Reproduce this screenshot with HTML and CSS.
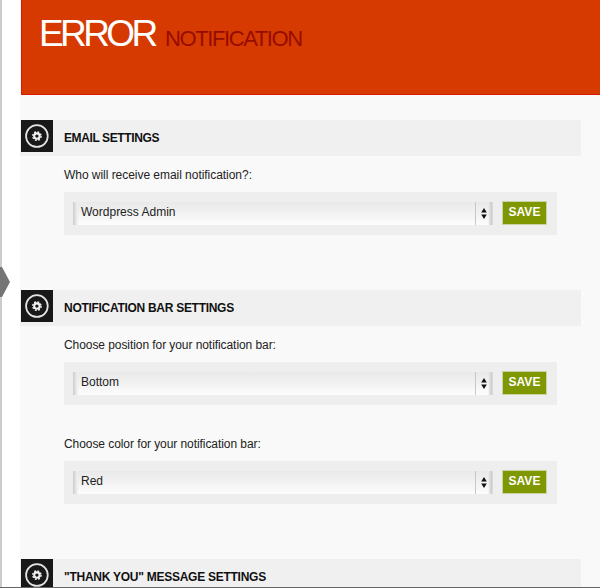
FILE: index.html
```html
<!DOCTYPE html>
<html lang="en">
<head>
<meta charset="utf-8">
<title>Error Notification</title>
<link rel="stylesheet" href="styles.css">
</head>
<body>
<svg class="defs" width="0" height="0" aria-hidden="true">
  <symbol id="gear" viewBox="0 0 33 33">
    <circle cx="16.4" cy="16.6" r="11.2" fill="none" stroke="#e4e4e4" stroke-width="1.8"/>
    <circle cx="16.4" cy="16.6" r="2.8" fill="none" stroke="#f2f2f2" stroke-width="2.1"/>
    <circle cx="16.4" cy="16.6" r="4.3" fill="none" stroke="#f2f2f2" stroke-width="1.5" stroke-dasharray="1.9 1.477"/>
  </symbol>
  <symbol id="arrows" viewBox="0 0 6 11">
    <path d="M3 0L5.8 4.4H.2zM3 11L.2 6.6h5.6z" fill="#111"/>
  </symbol>
</svg>
<div class="page">
  <div class="edge"></div>
  <svg class="marker" width="10" height="30" viewBox="0 0 10 30" aria-hidden="true"><path d="M0 0H2L10 15L2 30H0z" fill="#757575"/></svg>
  <main class="content">
    <header class="banner">
      <h1><span class="error">ERROR</span><span class="sub">NOTIFICATION</span></h1>
    </header>
    <section class="section first">
      <div class="head"><svg class="icon"><use href="#gear"/></svg><h2 class="t-email">EMAIL SETTINGS</h2></div>
      <div class="field">
        <label class="l-who">Who will receive email notification?:</label>
        <div class="row"><div class="select"><span>Wordpress Admin</span><i><svg><use href="#arrows"/></svg></i></div><button>SAVE</button></div>
      </div>
    </section>
    <section class="section second">
      <div class="head"><svg class="icon"><use href="#gear"/></svg><h2>NOTIFICATION BAR SETTINGS</h2></div>
      <div class="field">
        <label>Choose position for your notification bar:</label>
        <div class="row"><div class="select"><span>Bottom</span><i><svg><use href="#arrows"/></svg></i></div><button>SAVE</button></div>
      </div>
      <div class="field next">
        <label>Choose color for your notification bar:</label>
        <div class="row"><div class="select"><span>Red</span><i><svg><use href="#arrows"/></svg></i></div><button>SAVE</button></div>
      </div>
    </section>
    <section class="section">
      <div class="head"><svg class="icon"><use href="#gear"/></svg><h2 class="t-thanks">"THANK YOU" MESSAGE SETTINGS</h2></div>
    </section>
  </main>
</div>
</body>
</html>
```
FILE: styles.css
```css
* { box-sizing: border-box; }
body { margin: 0; background: #fff; font-family: "Liberation Sans", Arial, sans-serif; color: #222; }
.defs { position: absolute; }
.page { position: relative; display: flex; width: 600px; height: 588px; overflow: hidden; border-bottom: 1px solid #666; }
.edge { flex: none; width: 2px; margin-right: 18px; background: #ccc; }
.marker { position: absolute; left: 0; top: 267px; }
.content { flex: 1; min-width: 0; background: #f9f9f9; }
.banner { height: 95px; margin-left: 1px; padding: 12px 0 0 17px; background: #d63a00; border: solid #dc1800; border-width: 0 0 1px 1px; }
h1 { margin: 0; display: flex; align-items: baseline; font-weight: 400; line-height: 43px; white-space: nowrap; }
.error { width: 126px; font-size: 37px; letter-spacing: -3.6px; color: #fff; }
.sub { font-size: 22px; letter-spacing: -1.4px; color: #960c00; }
.section { height: 170px; }
.first { margin-top: 25px; }
.second { height: 269px; }
.head { display: flex; width: 561px; height: 36px; background: #f0f0f0; }
.icon { flex: none; width: 32px; height: 32px; margin-left: 1px; background: #181818; }
h2 { margin: 0 0 0 11px; font-size: 12px; line-height: 37px; font-weight: 700; letter-spacing: -.29px; color: #111; white-space: nowrap; }
.t-email { letter-spacing: -.39px; }
.t-thanks { letter-spacing: -.26px; }
.field { width: 493px; margin-left: 44px; padding-top: 10px; }
.next { padding-top: 30px; }
label { display: block; height: 26px; font-size: 12px; line-height: 18px; letter-spacing: -.07px; white-space: nowrap; }
.l-who { letter-spacing: -.04px; }
.row { display: flex; height: 43px; padding: 9px 10px 10px 9px; background: #eee; align-items: flex-start; }
.select { display: flex; width: 420px; height: 23px; margin-top: 1px; padding-left: 8px; justify-content: space-between; font-size: 12px; line-height: 21px; background: linear-gradient(90deg, #ccc 0, #ddd 2px, #eee 4px, transparent 6px), linear-gradient(#e9e9e9, #f1f1f1 45%, #fdfdfd); }
.select i { display: flex; align-items: center; padding-left: 5px; width: 18px; border-left: 1px solid #c8c8c8; background: linear-gradient(90deg, transparent 12px, #ddd 14px, #c8c8c8 16px, #eee 17px); }
.select i svg { width: 6px; height: 11px; }
button { width: 45px; height: 24px; margin-left: 9px; padding: 0 0 2px; border: 1px solid #c9d4a5; background: #7f9700; color: #fff; font: 700 12px/18px "Liberation Sans", Arial, sans-serif; }
```
